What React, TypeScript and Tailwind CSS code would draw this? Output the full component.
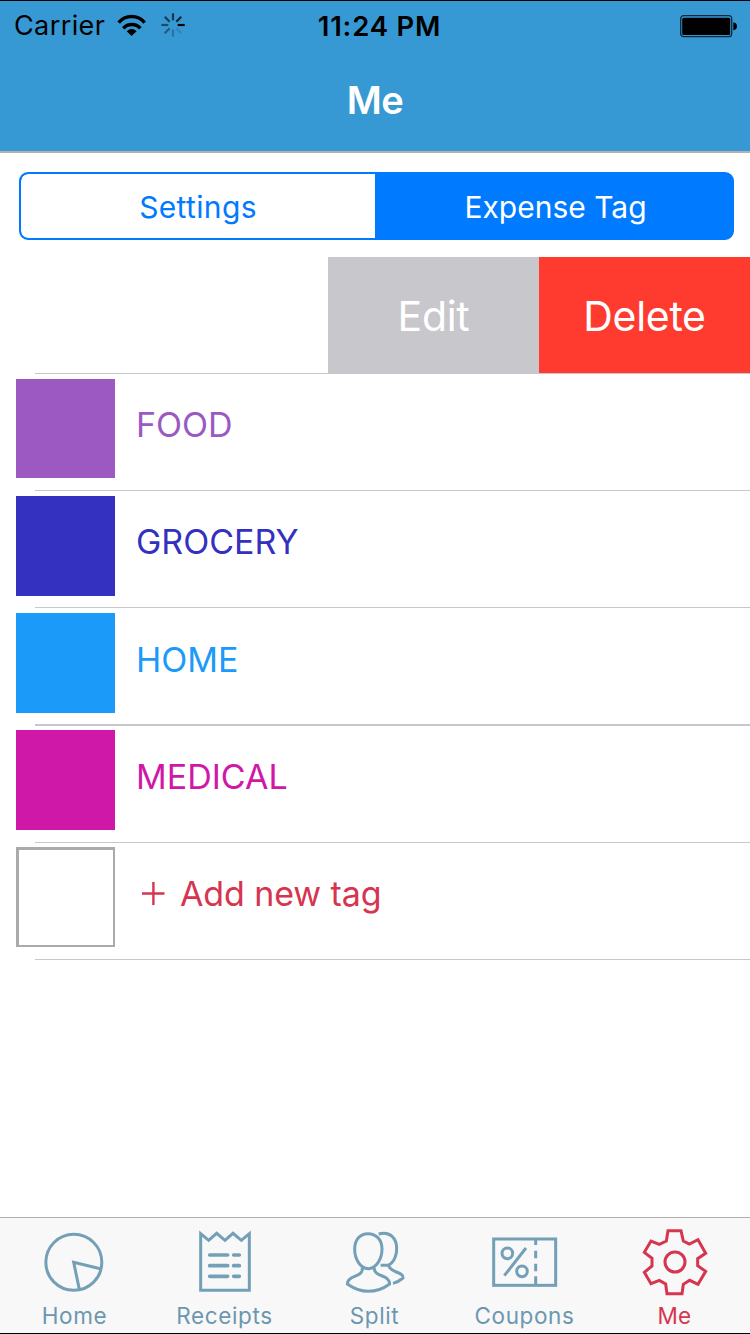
import type { ReactNode } from 'react';

const spokes = [
  { angle: 0, opacity: 1 },
  { angle: -45, opacity: 0.75 },
  { angle: -90, opacity: 0.65 },
  { angle: -135, opacity: 0.6 },
  { angle: 180, opacity: 0.5 },
  { angle: 135, opacity: 0.4 },
  { angle: 90, opacity: 0.25 },
  { angle: 45, opacity: 0.12 },
];

function StatusBar() {
  return (
    <div className="grid h-[49px] grid-cols-3 items-center text-black">
      <div className="flex items-center pl-[14px]">
        <span className="w-[103px] text-[27px] leading-[50px] tracking-[0.4px] whitespace-nowrap">Carrier</span>
        <svg className="mb-0.5 h-6 w-[30px]" viewBox="351 37 90 72" fill="none" stroke="#000" strokeWidth="10.5">
          <path d="M356 66A51 51 0 0 1 434 66" />
          <path d="M370 83A34 34 0 0 1 421 83" />
          <path d="M395 106L380 92Q395 77 410 92Z" fill="#000" stroke="none" />
        </svg>
        <svg className="mb-0.5 ml-[14px] h-6 w-6" viewBox="484 38 72 72" stroke="#000" strokeWidth="6.5">
          {spokes.map((s) => (
            <line key={s.angle} x1="534" y1="74" x2="555" y2="74" opacity={s.opacity} transform={`rotate(${s.angle} 520 74)`} />
          ))}
        </svg>
      </div>
      <div className="pl-[9px] text-center text-[27.5px] leading-[50px] font-semibold tracking-[0.8px] whitespace-nowrap">11:24 PM</div>
      <div className="flex justify-end pr-3">
        <svg className="mb-px h-6 w-[59px]" viewBox="0 0 59 24" fill="none">
          <rect x="1.7" y="1.7" width="51" height="21" rx="3" stroke="#0d2a3d" strokeWidth="1.3" />
          <rect x="3.2" y="3.7" width="48" height="17.3" rx="1.5" fill="#000" />
          <path d="M54.3 8.3Q58 8.8 58 12.2T54.3 16.2Z" fill="#000" />
        </svg>
      </div>
    </div>
  );
}

const tags = [
  { name: 'FOOD', swatch: 'h-[99px] bg-[#9b59c1]', text: 'text-[#9b59c1]', row: 'h-[117px] pt-[5px]', line: 'h-px', label: 'h-[91px]' },
  { name: 'GROCERY', swatch: 'h-[100px] bg-[#3430c0]', text: 'text-[#3430c0]', row: 'h-[117px] pt-[5px]', line: 'h-px', label: 'h-[91px]' },
  { name: 'HOME', swatch: 'h-[100px] bg-[#1b9af9]', text: 'text-[#1b9af9]', row: 'h-[118px] pt-[5px]', line: 'h-0.5', label: 'h-[92px]' },
  { name: 'MEDICAL', swatch: 'h-[100px] bg-[#d018a8]', text: 'text-[#d018a8]', row: 'h-[117px] pt-1', line: 'h-px', label: 'h-[92px]' },
];

type RowProps = { row: string; swatch: string; line: string; label: string; children: ReactNode };

function Row({ row, swatch, line, label, children }: RowProps) {
  return (
    <li className={`flex flex-col justify-between ${row}`}>
      <div className="flex pl-4">
        <div className={`w-[99px] shrink-0 ${swatch}`} />
        <div className={`flex items-center pl-[21px] ${label}`}>{children}</div>
      </div>
      <div className={`ml-[35px] bg-[#c8c7cc] ${line}`} />
    </li>
  );
}

function Tab({ label, active, children }: { label: string; active?: boolean; children: ReactNode }) {
  return (
    <a className={`flex flex-col items-center ${active ? 'text-[#d63550]' : 'text-[#74a0b7]'}`}>
      <svg className="h-20 w-[150px]" viewBox="0 39 450 240" fill="none" stroke="currentColor" strokeWidth="9">
        {children}
      </svg>
      <span className={`pr-px text-[22.5px] leading-9 whitespace-nowrap ${active ? 'tracking-[0.3px]' : 'tracking-[0.6px] text-[#6c97b0]'}`}>{label}</span>
    </a>
  );
}

export default function App() {
  return (
    <div className="flex h-[1334px] w-[750px] flex-col overflow-hidden border-y border-black bg-white font-['Inter',sans-serif]">
      <header className="h-[152px] shrink-0 border-b-2 border-[#b2b2b2] bg-[#3799d3]">
        <StatusBar />
        <h1 className="text-center text-[38px] leading-[101px] font-semibold tracking-[-0.6px] text-white">Me</h1>
      </header>

      <div className="mt-[19px] ml-[19px] flex h-[68px] w-[715px] shrink-0 overflow-hidden rounded-[9px] border-2 border-[#007aff] bg-[#007aff] text-[30px]">
        <div className="flex w-[354px] items-center justify-center rounded-l-[7px] bg-white pt-0.5 tracking-[0.35px] text-[#007aff]">Settings</div>
        <div className="flex flex-1 items-center justify-center pt-0.5 pl-1 text-white">Expense Tag</div>
      </div>

      <ul className="mt-[17px] flex flex-1 flex-col">
        <li className="flex h-[117px] flex-col">
          <div className="flex h-[116px] justify-end text-[41px] tracking-[-0.3px] text-white">
            <div className="flex w-[211px] items-center justify-center bg-[#c8c7cc] pt-[3px]">Edit</div>
            <div className="flex w-[211px] items-center justify-center bg-[#ff3b30] pt-[3px]">Delete</div>
          </div>
          <div className="ml-[35px] h-px bg-[#c8c7cc]" />
        </li>
        {tags.map((t) => (
          <Row key={t.name} row={t.row} swatch={t.swatch} line={t.line} label={t.label}>
            <span className={`text-[34px] whitespace-nowrap ${t.text}`}>{t.name}</span>
          </Row>
        ))}
        <Row row="h-[117px] pt-1" swatch="h-[100px] border-2 border-t-[3px] border-l-[3px] border-[#aaaaaa]" line="h-px" label="h-[92px]">
          <span className="flex items-center text-[34px] tracking-[-0.1px] whitespace-nowrap text-[#d63550]">
            <svg className="mr-[15px] ml-[5px] h-6 w-6" viewBox="0 0 24 24" stroke="currentColor" strokeWidth="2.4">
              <path d="M1 12.5H23.5M12.4 1V24" />
            </svg>
            Add new tag
          </span>
        </Row>
      </ul>

      <nav className="grid h-[116px] shrink-0 grid-cols-5 border-t border-[#b0b0b0] bg-[#f8f8f8]">
        <Tab label="Home">
          <circle cx="221.5" cy="172" r="84" />
          <path d="M301 191L221 172L238 253" />
        </Tab>
        <Tab label="Receipts">
          <path d="M152 86L176 106L200 85L225 106L249 85L274 106L298 86V256H152Z" />
          <path d="M179 150H233M251 150H268M179 182H233M251 182H268M179 214H233M251 214H268" strokeWidth="11" strokeLinecap="round" />
        </Tab>
        <Tab label="Split">
          <path d="M204 86C230 86 246 106 246 132C246 162 228 191 205 191C181 191 164 162 164 132C164 106 179 86 204 86Z" />
          <path d="M187 188C188 203 180 208 164 214C148 220 142 226 142 237C162 251 184 259 205 259C228 259 250 251 269 237C269 226 263 219 247 213C231 207 223 202 222 188" strokeLinejoin="round" />
          <path d="M236 87C269 77 290 99 290 130C290 159 276 181 257 181H242M265 178C267 190 276 196 289 201C305 207 309 210 309 219Q295 231 279 235" />
        </Tab>
        <Tab label="Coupons">
          <rect x="131" y="102" width="186" height="139" />
          <path d="M257 102V120M257 137V160M257 176V199M257 214V240" />
          <path d="M228 129L163 212" />
          <circle cx="172" cy="145" r="16" />
          <circle cx="216" cy="199" r="16" />
        </Tab>
        <Tab label="Me" active>
          <path d="M204 77H243L250 108L268 117L294 104L317 145L293 161V182L317 199L294 238L269 226L250 238L246 266H201L197 237L178 226L153 236L133 202L156 183V160L133 142L153 108L178 118L199 108Z" />
          <circle cx="225" cy="171" r="30" />
        </Tab>
      </nav>
    </div>
  );
}
